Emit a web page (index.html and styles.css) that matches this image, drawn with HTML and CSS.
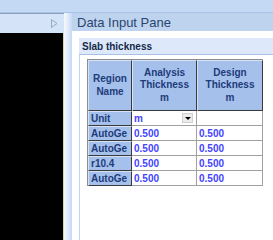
FILE: index.html
```html
<!DOCTYPE html>
<html lang="en">
<head>
    <meta charset="UTF-8">
    <title>Data Input Pane</title>
    <link rel="stylesheet" href="styles.css">
</head>
<body>
    <div class="topbar"></div>
    <div class="main">
        <div class="side">
            <div class="side-title">
                <svg class="arrow" width="7" height="9" viewBox="0 0 7 9">
                    <polygon points="0.5,0.5 6,4.5 0.5,8.5" fill="none" stroke="#93a9c8" stroke-width="1"/>
                </svg>
            </div>
            <div class="side-body"></div>
        </div>
        <div class="splitter"></div>
        <div class="pane">
            <div class="pane-title">Data Input Pane</div>
            <div class="pane-body">
                <div class="group-title">Slab thickness</div>
                <div class="group-body">
                    <table class="grid">
                        <tr>
                            <th class="c1">Region<br>Name</th>
                            <th class="c2">Analysis<br>Thickness<br>m</th>
                            <th class="c3">Design<br>Thickness<br>m</th>
                        </tr>
                        <tr>
                            <td class="rh">Unit</td>
                            <td>
                                <div class="combo">
                                    <span>m</span>
                                    <span class="drop"><span class="tri"></span></span>
                                </div>
                            </td>
                            <td></td>
                        </tr>
                        <tr>
                            <td class="rh">AutoGe</td>
                            <td>0.500</td>
                            <td>0.500</td>
                        </tr>
                        <tr>
                            <td class="rh">AutoGe</td>
                            <td>0.500</td>
                            <td>0.500</td>
                        </tr>
                        <tr>
                            <td class="rh">r10.4</td>
                            <td>0.500</td>
                            <td>0.500</td>
                        </tr>
                        <tr>
                            <td class="rh">AutoGe</td>
                            <td>0.500</td>
                            <td>0.500</td>
                        </tr>
                    </table>
                </div>
            </div>
        </div>
    </div>
</body>
</html>
```

FILE: styles.css
```css
body {
    margin: 0;
    width: 273px;
    height: 240px;
    overflow: hidden;
    background: #c4d9f4;
    font-family: "Liberation Sans", Arial, sans-serif;
}
.topbar {
    height: 12px;
    border-bottom: 1px solid #a9c3e6;
}
.main {
    display: flex;
    height: 227px;
}
.side {
    width: 64px;
    display: flex;
    flex-direction: column;
}
.side-title {
    height: 20px;
    background: #d4e3f7;
    border-top: 1px solid #8d9db5;
    box-sizing: border-box;
    display: flex;
    align-items: center;
    justify-content: flex-end;
    padding-right: 6px;
}
.arrow {
    display: block;
}
.side-body {
    flex: 1;
    background: #000;
    border-right: 1px solid #d8d69c;
}
.splitter {
    width: 8px;
    background: linear-gradient(to right, #f6f9fd, #e4eefa 40%, #c5d9f3);
}
.pane {
    flex: 1;
    background: #fff;
    display: flex;
    flex-direction: column;
}
.pane-title {
    height: 18px;
    line-height: 19px;
    background: #bed3ed;
    color: #2a4570;
    font-size: 13px;
    padding-left: 5px;
}
.pane-body {
    flex: 1;
    padding: 7px 0 0 7px;
    display: flex;
    flex-direction: column;
}
.group-title {
    height: 16px;
    line-height: 17px;
    background: #dde9fa;
    border-bottom: 1px solid #a8c2e6;
    color: #15294a;
    font-size: 10px;
    font-weight: bold;
    padding-left: 3px;
}
.group-body {
    flex: 1;
    border-left: 1px solid #c0d4ee;
    padding: 4px 0 0 7px;
}
.grid {
    border-collapse: separate;
    border-spacing: 0;
    table-layout: fixed;
    width: 176px;
    border-top: 1px solid #8c8c8c;
    border-left: 1px solid #8c8c8c;
    font-size: 10px;
    font-weight: bold;
}
.grid th, .grid td {
    box-sizing: border-box;
    padding: 0 2px;
    white-space: nowrap;
    overflow: hidden;
}
.grid th {
    height: 51px;
    line-height: 12.5px;
    background: #a5c0eb;
    color: #1d3c7a;
    text-align: center;
    border-top: 1px solid #d5e2f6;
    border-left: 1px solid #d5e2f6;
    border-right: 1px solid #3a3a3a;
    border-bottom: 1px solid #3a3a3a;
}
.grid .c1 { width: 44px; }
.grid .c2 { width: 65px; }
.grid .c3 { width: 66px; }
.grid td {
    height: 15px;
    line-height: 13px;
    color: #4444ff;
    background: #fff;
    border-right: 1px solid #a0a0a0;
    border-bottom: 1px solid #a0a0a0;
}
.grid td.rh {
    background: #a5c0eb;
    color: #1d3c7a;
    border-top: 1px solid #d5e2f6;
    border-left: 1px solid #d5e2f6;
    border-right: 1px solid #3a3a3a;
    border-bottom: 1px solid #3a3a3a;
    line-height: 12px;
}
.combo {
    display: flex;
    justify-content: space-between;
    align-items: center;
    padding-right: 1px;
}
.drop {
    width: 11px;
    height: 10px;
    background: #ececec;
    border: 1px solid #d0d0d0;
    box-sizing: border-box;
    display: flex;
    align-items: center;
    justify-content: center;
}
.tri {
    width: 0;
    height: 0;
    border-left: 3px solid transparent;
    border-right: 3px solid transparent;
    border-top: 3px solid #000;
}
```
